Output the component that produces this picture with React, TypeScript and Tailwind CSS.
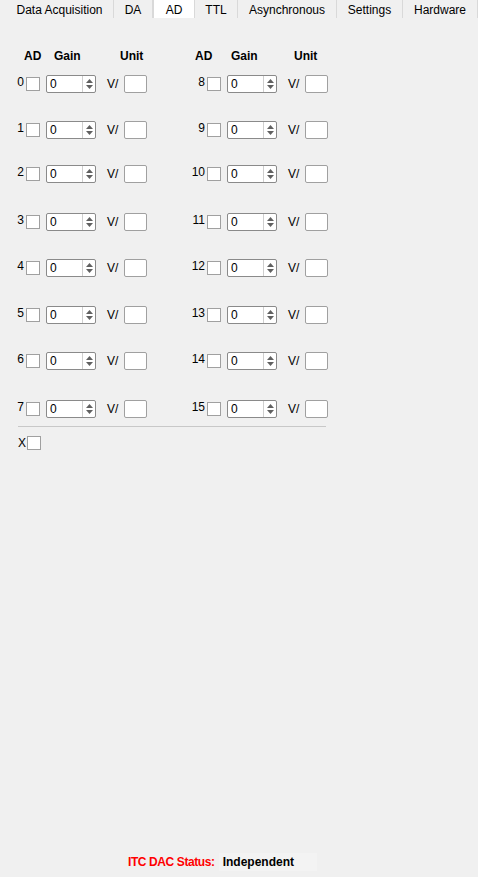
const tabs = [
  { label: "Data Acquisition", w: "w-[108px]" },
  { label: "DA", w: "w-[39px]" },
  { label: "AD", w: "w-[42px]", active: true },
  { label: "TTL", w: "w-[43px]" },
  { label: "Asynchronous", w: "w-[99px]" },
  { label: "Settings", w: "w-[66px]" },
  { label: "Hardware", w: "w-[75px]" },
];

// vertical spacing between rows as in the original form
const rowGaps = ["mt-[12px]", "mt-[28px]", "mt-[26px]", "mt-[30px]", "mt-[28px]", "mt-[29px]", "mt-[28px]", "mt-[30px]"];

const Checkbox = () => (
  <div className="w-[14px] h-[14px] bg-white border border-[#a0a0a0] shrink-0" />
);

const SpinBox = () => (
  <div className="flex w-[50px] h-[18px] bg-white border border-[#8a8a8a] rounded-[2px] shrink-0">
    <div className="flex-1 pl-[3px] leading-[16px] text-[12px]">0</div>
    <div className="w-[13px] border-l border-[#cfcfcf] flex flex-col items-center justify-center gap-[2px]">
      <svg width="7" height="4" viewBox="0 0 7 4">
        <path d="M0 4 L3.5 0 L7 4 Z" fill="#606060" />
      </svg>
      <svg width="7" height="4" viewBox="0 0 7 4">
        <path d="M0 0 L3.5 4 L7 0 Z" fill="#606060" />
      </svg>
    </div>
  </div>
);

const AdRow = ({ n, gap }: { n: number; gap: string }) => (
  <div className={`flex items-center h-[18px] ${gap}`}>
    <span className="w-[14px] text-right text-[12px] leading-none -mt-[4px]">{n}</span>
    <div className="ml-[2px]">
      <Checkbox />
    </div>
    <div className="ml-[6px]">
      <SpinBox />
    </div>
    <span className="ml-[11px] text-[12px] w-[17px]">V/</span>
    <div className="w-[23px] h-[18px] bg-white border border-[#a0a0a0] rounded-[2px]" />
  </div>
);

const Column = ({ start, head }: { start: number; head: string[] }) => (
  <div className="flex flex-col w-[160px]">
    <div className={`flex text-[12px] font-bold h-[14px] leading-[14px] ${head[0]}`}>
      <span className={head[1]}>AD</span>
      <span className={head[2]}>Gain</span>
      <span>Unit</span>
    </div>
    {rowGaps.map((g, i) => (
      <AdRow key={i} n={start + i} gap={g} />
    ))}
  </div>
);

export default function App() {
  return (
    <div
      className="w-[478px] h-[877px] bg-[#f0f0f0] flex flex-col text-black"
      style={{ fontFamily: '"Segoe UI", "Liberation Sans", Arial, sans-serif' }}
    >
      <div className="flex h-[18px] pl-[6px]">
        {tabs.map((t) => (
          <div
            key={t.label}
            className={`${t.w} h-[18px] pt-[3px] leading-[14px] text-center text-[12px] border-r border-[#d9d9d9] ${
              t.active ? "bg-white border-l" : ""
            }`}
          >
            {t.label}
          </div>
        ))}
      </div>

      <div className="pl-[10px] pt-[31px]">
        <div className="flex gap-[21px]">
          <Column start={0} head={["pl-[14px]", "w-[30px]", "w-[66px]"]} />
          <Column start={8} head={["pl-[4px]", "w-[36px]", "w-[63px]"]} />
        </div>
        <div className="ml-[8px] mt-[8px] w-[308px] h-px bg-[#c8c8c8]" />
        <div className="flex items-center mt-[9px] ml-[8px] h-[14px]">
          <span className="text-[12px] w-[9px] leading-none">X</span>
          <Checkbox />
        </div>
      </div>

      <div className="mt-auto mb-[6px] flex items-center pl-[128px] h-[18px] text-[12px] font-bold">
        <span className="text-[#ff0000] tracking-[-0.4px]">ITC DAC Status:</span>
        <span className="ml-[4px] pl-[4px] w-[98px] h-[18px] leading-[18px] bg-[#f3f3f3]">Independent</span>
      </div>
    </div>
  );
}
